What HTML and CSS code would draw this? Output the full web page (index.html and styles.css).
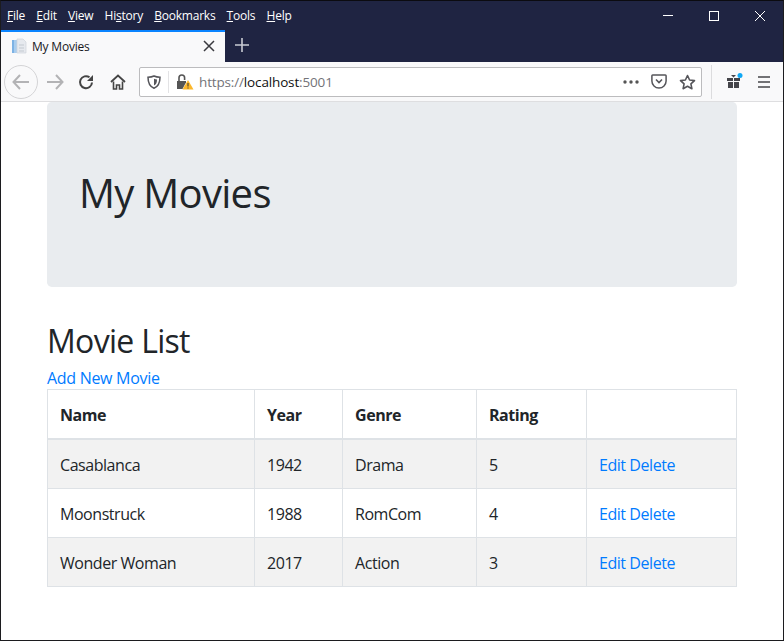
FILE: index.html
```html
<!DOCTYPE html>
<html lang="en">
<head>
<meta charset="utf-8">
<title>My Movies</title>
<link rel="stylesheet" href="styles.css">
</head>
<body>
<div class="window">
  <header class="titlebar">
    <nav class="menu">
      <span><u>F</u>ile</span><span><u>E</u>dit</span><span><u>V</u>iew</span><span>Hi<u>s</u>tory</span><span><u>B</u>ookmarks</span><span><u>T</u>ools</span><span><u>H</u>elp</span>
    </nav>
    <div class="winctl">
      <svg width="46" height="30" viewBox="0 0 46 30"><path d="M18 14.5h10" stroke="#fff" fill="none"/></svg>
      <svg width="46" height="30" viewBox="0 0 46 30"><rect x="18.5" y="10.5" width="9" height="9" stroke="#fff" fill="none"/></svg>
      <svg width="46" height="30" viewBox="0 0 46 30"><path d="M18 10l10 10M28 10l-10 10" stroke="#fff" fill="none"/></svg>
    </div>
  </header>
  <div class="tabstrip">
    <div class="tab">
      <svg class="favicon" width="16" height="16" viewBox="0 0 16 16"><rect x="1" y="2" width="5" height="13" fill="#a9cdee"/><rect x="1" y="2" width="2" height="13" fill="#7db2e4"/><path d="M6 1h6l3 3v11H6z" fill="#e6e9ee" stroke="#cfd4da" stroke-width=".7"/><path d="M8 7h5M8 10h5M8 13h5" stroke="#c3c9d0"/></svg>
      <span class="tabtitle">My Movies</span>
      <svg class="tabclose" width="12" height="12" viewBox="0 0 12 12"><path d="M1 1l10 10M11 1L1 11" stroke="#3a3a3f" stroke-width="1.500" fill="none"/></svg>
    </div>
    <svg class="newtab" width="14" height="14" viewBox="0 0 14 14"><path d="M7 0v14M0 7h14" stroke="#c9cbd3" stroke-width="1.600" fill="none"/></svg>
  </div>
  <div class="toolbar">
    <div class="back"><svg width="18" height="16" viewBox="0 0 18 16"><path d="M8 1L1.500 8 8 15M2 8h15" stroke="#b3b3b5" stroke-width="2" fill="none"/></svg></div>
    <svg class="tool fwd" width="18" height="16" viewBox="0 0 18 16"><path d="M10 1l6.500 7L10 15M16 8H1" stroke="#b3b3b5" stroke-width="2" fill="none"/></svg>
    <svg class="tool reload" width="16" height="16" viewBox="0 0 16 16"><path d="M14 8.500A6 6 0 1 1 11.500 3.300" stroke="#444" stroke-width="2" fill="none"/><path d="M15 1v6H9z" fill="#444"/></svg>
    <svg class="tool home" width="16" height="16" viewBox="0 0 16 16"><path d="M1 8l7-6.500L15 8" stroke="#444" stroke-width="1.800" fill="none"/><path d="M3.500 7.500V15h3v-4h3v4h3V7.500" stroke="#444" stroke-width="1.600" fill="none"/></svg>
    <div class="urlbar">
      <svg class="shield" width="14" height="14" viewBox="0 0 14 14"><path d="M7 1c2 1 3.500 1.200 6 1.200 0 5-1 9-6 11C2 11.200 1 7.200 1 2.200 3.500 2.200 5 2 7 1z" stroke="#55555a" stroke-width="1.500" fill="none"/><path d="M7 3.800c1 .5 2 .6 3 .6 0 3-.6 4.800-3 6z" fill="#55555a"/></svg>
      <span class="urlsep"></span>
      <svg class="lock" width="18" height="16" viewBox="0 0 18 16"><path d="M3 7V3.800a2.800 2.800 0 0 1 5.600 0V6" stroke="#555" stroke-width="1.600" fill="none"/><path d="M1 7h9v1.500L6.500 15H1z" fill="#555"/><path d="M12 6l5.500 9.500H6.500z" fill="#fcb72b"/><path d="M12 9v3.500M12 13.500v1" stroke="#333" stroke-width="1"/></svg>
      <span class="url">https://<b>localhost</b>:5001</span>
      <svg class="dots" width="16" height="4" viewBox="0 0 16 4"><circle cx="2" cy="2" r="1.700" fill="#555"/><circle cx="8" cy="2" r="1.700" fill="#555"/><circle cx="14" cy="2" r="1.700" fill="#555"/></svg>
      <svg class="pocket" width="16" height="15" viewBox="0 0 16 15"><path d="M1.700 1h12.600a.8.8 0 0 1 .8.800v5.200a7 7 0 0 1-14.200 0V1.800a.8.8 0 0 1 .8-.8z" stroke="#55555a" stroke-width="1.500" fill="none"/><path d="M5 5.500l3 3 3-3" stroke="#55555a" stroke-width="1.600" fill="none"/></svg>
      <svg class="star" width="17" height="16" viewBox="0 0 17 16"><path d="M8.500 1.500l2.100 4.500 4.900.6-3.600 3.300 1 4.800-4.400-2.400-4.400 2.400 1-4.800L1.500 6.600l4.900-.6z" stroke="#55555a" stroke-width="1.600" stroke-linejoin="round" fill="none"/></svg>
    </div>
    <span class="toolsep"></span>
    <svg class="gift" width="18" height="18" viewBox="0 0 18 18"><path d="M2 5h6v3H2zM9 5h6v3H9zM3 9h5v6H3zM9 9h5v6H9z" fill="#45454a"/><path d="M6 2l2.500 2.500L11 2z" fill="#45454a"/><circle cx="15" cy="2.500" r="2.500" fill="#0fa8f5"/></svg>
    <svg class="burger" width="14" height="12" viewBox="0 0 14 12"><path d="M1 1h12M1 6h12M1 11h12" stroke="#45454a" stroke-width="1.500" fill="none"/></svg>
  </div>
  <main class="container">
    <section class="jumbotron"><h1>My Movies</h1></section>
    <h2>Movie List</h2>
    <a class="add" href="#">Add New Movie</a>
    <table class="movies">
      <colgroup><col class="c1"><col class="c2"><col class="c3"><col class="c4"><col class="c5"></colgroup>
      <thead><tr><th>Name</th><th>Year</th><th>Genre</th><th>Rating</th><th></th></tr></thead>
      <tbody>
        <tr><td>Casablanca</td><td>1942</td><td>Drama</td><td>5</td><td><a href="#">Edit</a> <a href="#">Delete</a></td></tr>
        <tr><td>Moonstruck</td><td>1988</td><td>RomCom</td><td>4</td><td><a href="#">Edit</a> <a href="#">Delete</a></td></tr>
        <tr><td>Wonder Woman</td><td>2017</td><td>Action</td><td>3</td><td><a href="#">Edit</a> <a href="#">Delete</a></td></tr>
      </tbody>
    </table>
  </main>
</div>
</body>
</html>
```
FILE: styles.css
```css
* { box-sizing: border-box; }
html, body { margin: 0; padding: 0; }
body { width: 784px; height: 641px; overflow: hidden; background: #fff; font-family: "Open Sans", "Noto Sans", sans-serif; color: #212529; }
.window { height: 641px; border: 1px solid #1c1c1f; border-top-color: #0b0b10; display: flex; flex-direction: column; overflow: hidden; }
.titlebar { height: 29px; flex: none; background: #1f2442; color: #fff; display: flex; justify-content: space-between; align-items: center; }
.menu { display: flex; gap: 11.200px; padding-left: 6px; font-size: 12px; letter-spacing: -.22px; }
.winctl { display: flex; margin-top: 1px; }
.winctl svg { display: block; }
.tabstrip { height: 32px; flex: none; background: #1f2442; display: flex; align-items: center; }
.tab { width: 224px; height: 32px; background: #f9f9fa; border-top: 2px solid #0a84ff; display: flex; align-items: center; padding: 0 10px 2px; }
.favicon { flex: none; }
.tabtitle { font-size: 12px; margin-left: 5px; letter-spacing: -.2px; flex: 1; color: #18181d; }
.tabclose { flex: none; }
.newtab { margin-left: 10px; margin-top: -2px; }
.toolbar { height: 40px; flex: none; background: #f9f9fa; border-bottom: 1px solid #dedee0; display: flex; align-items: center; padding: 0 12px 0 3px; }
.back { width: 34px; height: 34px; border: 1px solid #d4d4d6; border-radius: 50%; display: flex; align-items: center; justify-content: center; flex: none; }
.tool { flex: none; }
.fwd { margin-left: 8px; }
.reload { margin-left: 14px; }
.home { margin-left: 16px; }
.urlbar { width: 563px; height: 30px; margin-left: 13px; background: #fff; border: 1px solid #bcbcbe; border-radius: 2px; display: flex; align-items: center; padding: 0 5px 0 7px; flex: none; }
.shield { flex: none; }
.urlsep { width: 1px; height: 22px; background: #e3e3e5; margin: 0 7px; flex: none; }
.lock { flex: none; }
.url { font-size: 13.500px; color: #737378; margin-left: 5px; flex: 1; letter-spacing: -.15px; }
.url b { font-weight: 400; color: #111; }
.dots { flex: none; margin-right: 12px; }
.pocket { flex: none; margin-right: 12px; }
.star { flex: none; }
.toolsep { width: 1px; height: 34px; background: #dcdcde; margin-left: 9px; flex: none; }
.gift { margin-left: 13px; flex: none; }
.burger { margin-left: 14px; flex: none; }
.container { flex: 1; padding: 0 46px; }
.jumbotron { background: #e9ecef; border-radius: 4.800px; padding: 67px 32px 0; height: 185px; }
h1 { margin: 0; font-size: 40px; font-weight: 400; line-height: 48px; letter-spacing: -.7px; }
h2 { margin: 35px 0 9px; font-size: 32px; font-weight: 400; line-height: 38px; letter-spacing: -.7px; }
.add { display: block; font-size: 16px; line-height: 18px; color: #007bff; text-decoration: none; letter-spacing: -.3px; }
.movies { width: 689px; table-layout: fixed; border-collapse: collapse; margin-top: 2px; font-size: 16px; letter-spacing: -.45px; }
.c1 { width: 207px; } .c2 { width: 88px; } .c3 { width: 134px; } .c4 { width: 110px; } .c5 { width: 150px; }
.movies th, .movies td { border: 1px solid #dee2e6; padding: 13px 12px 11px; text-align: left; line-height: 24px; }
.movies th { font-weight: 700; border-bottom-width: 2px; }
.movies tbody tr:nth-child(odd) { background: #f2f2f2; }
.movies a { color: #007bff; text-decoration: none; }
```
